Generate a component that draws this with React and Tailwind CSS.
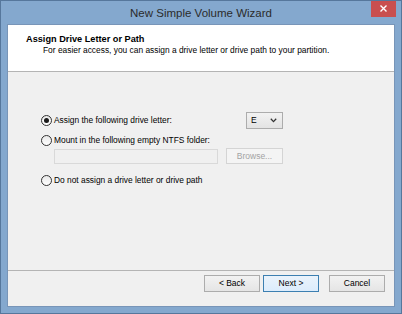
export default function App() {
  const Radio = ({ checked }) => (
    <span className="relative inline-block w-[11px] h-[11px] rounded-full border border-[#333] bg-gradient-to-b from-[#e8e8e8] to-white shrink-0">
      {checked && (
        <span className="absolute left-[2px] top-[2px] w-[5px] h-[5px] rounded-full bg-[#1a1a1a]" />
      )}
    </span>
  );
  const Btn = ({ children, def }) => (
    <div
      className={
        "w-[56px] h-[17px] flex items-center justify-center text-[8.5px] text-black border " +
        (def
          ? "border-[#3c7fb1] bg-gradient-to-b from-[#eaf3fb] to-[#dcecfc]"
          : "border-[#acacac] bg-gradient-to-b from-[#f2f2f2] to-[#e5e5e5]")
      }
    >
      {children}
    </div>
  );
  return (
    <div
      className="w-[402px] h-[314px] bg-[#84a8ce] border border-[#56779c] flex flex-col overflow-hidden"
      style={{ fontFamily: '"Liberation Sans", Arial, sans-serif' }}
    >
      {/* title bar */}
      <div className="relative h-[23px] flex items-center justify-center shrink-0">
        <span className="text-[11.5px] text-[#2b2b2b] pt-[2px]">New Simple Volume Wizard</span>
        <div className="absolute right-[5px] top-[-1px] w-[25px] h-[17px] bg-[#c94f4f] flex items-center justify-center">
          <svg width="7" height="7" viewBox="0 0 7 7">
            <path d="M0.5 0.5 L6.5 6.5 M6.5 0.5 L0.5 6.5" stroke="white" strokeWidth="1.4" />
          </svg>
        </div>
      </div>
      {/* content */}
      <div className="mx-[6px] h-[283px] bg-[#f0f0f0] border border-[#7895b8] flex flex-col">
        {/* header */}
        <div className="h-[47px] bg-white border-b border-[#b4b4b4] pl-[18px] pt-[9px] shrink-0">
          <div className="text-[9.2px] font-bold text-black leading-[11px]">Assign Drive Letter or Path</div>
          <div className="text-[8.4px] text-black leading-[10px] pl-[17px]">
            For easier access, you can assign a drive letter or drive path to your partition.
          </div>
        </div>
        {/* body */}
        <div className="flex-1 pt-[40px] pl-[33px] text-[8.4px] text-black">
          <div className="h-[17px] flex items-center">
            <div className="w-[205px] flex items-center gap-[2px]">
              <Radio checked />
              <span>Assign the following drive letter:</span>
            </div>
            <div className="w-[37px] h-[17px] border border-[#acacac] bg-gradient-to-b from-[#f2f2f2] to-[#e3e3e3] flex items-center justify-between pl-[4px] pr-[5px]">
              <span className="text-[8.5px]">E</span>
              <svg width="7" height="5" viewBox="0 0 7 5">
                <path d="M0.8 0.8 L3.5 3.6 L6.2 0.8" stroke="#333" strokeWidth="1.3" fill="none" />
              </svg>
            </div>
          </div>
          <div className="mt-[4px] h-[14px] flex items-center gap-[2px]">
            <Radio />
            <span>Mount in the following empty NTFS folder:</span>
          </div>
          <div className="mt-[1px] h-[16px] flex items-center pl-[13px]">
            <div className="w-[164px] h-[15px] border border-[#d9d9d9] bg-[#f0f0f0]" />
            <div className="ml-[8px] w-[57px] h-[16px] border border-[#d4d4d4] bg-[#f4f4f4] flex items-center justify-center text-[#a3a3a3] text-[8.5px]">
              Browse...
            </div>
          </div>
          <div className="mt-[9px] h-[14px] flex items-center gap-[2px]">
            <Radio />
            <span>Do not assign a drive letter or drive path</span>
          </div>
        </div>
        {/* footer */}
        <div className="h-[36px] border-t border-[#b4b4b4] flex items-start justify-end pt-[4px] pr-[9px] gap-[3px] shrink-0">
          <Btn>&lt; Back</Btn>
          <Btn def>Next &gt;</Btn>
          <div className="w-[4px]" />
          <Btn>Cancel</Btn>
        </div>
      </div>
    </div>
  );
}
